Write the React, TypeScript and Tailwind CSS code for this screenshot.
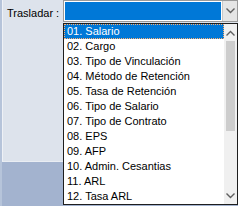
import React from 'react';

const items = [
  '01. Salario',
  '02. Cargo',
  '03. Tipo de Vinculación',
  '04. Método de Retención',
  '05. Tasa de Retención',
  '06. Tipo de Salario',
  '07. Tipo de Contrato',
  '08. EPS',
  '09. AFP',
  '10. Admin. Cesantias',
  '11. ARL',
  '12. Tasa ARL',
];

function Chevron({ up = false }: { up?: boolean }) {
  return (
    <svg width="9" height="6" viewBox="0 0 9 6" className={up ? 'rotate-180' : ''}>
      <path d="M0.5 0.5 L4.5 4.5 L8.5 0.5" fill="none" stroke="#606060" strokeWidth="1.4" />
    </svg>
  );
}

export default function App() {
  return (
    <div
      className="relative w-[238px] h-[206px] overflow-hidden bg-[#a3b3cf] text-[11px] text-black"
      style={{ fontFamily: '"Liberation Sans", Arial, sans-serif' }}
    >
      <div className="flex h-[206px]">
        {/* Left strip */}
        <div className="w-[2px] bg-[#b6c4da]" />

        {/* Form panel */}
        <div className="flex-1 flex flex-col">
          <div className="h-[162px] bg-[#dde3ec] border-l border-l-[#eef1f6] border-b border-b-[#e9edf3]">
            <div className="flex items-start">
              <div className="w-[60px] pl-[4px] pt-[6px] leading-[14px]">Trasladar :</div>
              {/* Combobox */}
              <div className="flex h-[22px] flex-1 border border-[#9a9a9a] bg-white">
                <div className="flex-1 m-[1px] bg-[#0078d7]" />
                <div className="w-[15px] bg-[#e5e5e5] border-l border-l-[#c8c8c8] flex items-center justify-center">
                  <Chevron />
                </div>
              </div>
            </div>
          </div>
        </div>
      </div>

      {/* Dropdown list */}
      <div className="absolute left-[63px] top-[23px] right-0 h-[182px] flex bg-white border border-[#1e1e1e]">
        <div className="flex-1 flex flex-col">
          {items.map((item, i) => (
            <div
              key={item}
              className={
                i === 0
                  ? 'h-[15px] leading-[13px] pl-[2px] bg-[#0078d7] text-white border border-dotted border-[#ffb070]'
                  : 'h-[15px] leading-[15px] pl-[3px] whitespace-nowrap'
              }
            >
              {item}
            </div>
          ))}
        </div>
        {/* Scrollbar */}
        <div className="w-[13px] flex flex-col bg-[#f0f0f0]">
          <div className="h-[17px] flex items-center justify-center">
            <Chevron up />
          </div>
          <div className="h-[90px] mx-[2px] bg-[#cdcdcd]" />
          <div className="flex-1" />
          <div className="h-[17px] flex items-center justify-center">
            <Chevron />
          </div>
        </div>
      </div>
    </div>
  );
}
